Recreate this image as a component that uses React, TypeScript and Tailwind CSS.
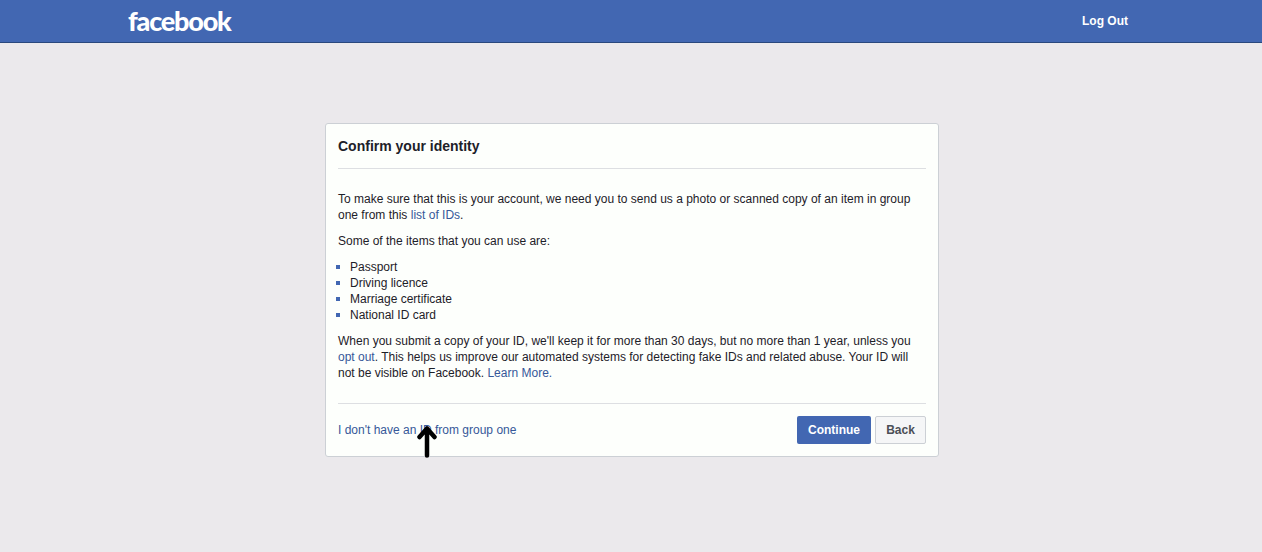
import React from "react";

const items = ["Passport", "Driving licence", "Marriage certificate", "National ID card"];

const Arrow: React.FC = () => (
  <svg className="absolute left-[90.5px] top-[301px]" width="20" height="33" viewBox="0 0 20 33" fill="none">
    <path d="M10 30.500V3.500M2.500 12L10 3.500 17.500 12" stroke="#000" strokeWidth="4.500" strokeLinecap="round" strokeLinejoin="round" />
  </svg>
);

export default function App() {
  return (
    <div className="min-h-[552px] bg-[#ebe9ec] font-['Liberation_Sans',Arial,sans-serif] text-xs leading-4 text-[#1d2129]">
      {/* Top bar */}
      <header className="h-[43px] border-b border-[#29487d] bg-[#4267b2]">
        <div className="flex h-[42px] items-center justify-between pl-[128px] pr-[134px]">
          <span className="font-['Lato',sans-serif] text-[27px] leading-[42px] font-black tracking-[-1.2px] text-white">facebook</span>
          <a className="text-xs font-bold text-white">Log Out</a>
        </div>
      </header>

      {/* Card */}
      <main className="ml-[325px] mt-[80px] w-[614px]">
        <div className="relative h-[334px] rounded-[3px] border border-[#ccd0d5] bg-[#fdfffc] px-3">
          <h2 className="h-[45px] border-b border-[#dddfe2] py-[14px] text-sm leading-[16px] font-bold text-[#1d2129]">
            Confirm your identity
          </h2>
          <div className="h-[235px] border-b border-[#dddfe2] py-[22px]">
            <p className="mb-[10px]">
              To make sure that this is your account, we need you to send us a photo or scanned copy of an item in group one from this{" "}
              <a className="text-[#365899]">list of IDs</a>.
            </p>
            <p className="mb-[10px]">Some of the items that you can use are:</p>
            <ul className="mb-[10px]">
              {items.map((item) => (
                <li key={item} className="flex items-center">
                  <span className="ml-[-2px] mr-[10px] h-1 w-1 bg-[#4267b2]" />
                  {item}
                </li>
              ))}
            </ul>
            <p>
              When you submit a copy of your ID, we'll keep it for more than 30 days, but no more than 1 year, unless you{" "}
              <a className="text-[#365899]">opt out</a>. This helps us improve our automated systems for detecting fake IDs and related abuse. Your ID will not be visible on Facebook.{" "}
              <a className="text-[#365899]">Learn More.</a>
            </p>
          </div>
          <div className="flex items-center justify-between pt-3">
            <a className="text-[#365899]">I don't have an ID from group one</a>
            <div className="flex gap-1">
              <button className="h-[28px] w-[74px] rounded-[2px] bg-[#4267b2] font-bold text-white">Continue</button>
              <button className="h-[28px] w-[51px] rounded-[2px] border border-[#ccd0d5] bg-[#f5f6f7] font-bold text-[#4b4f56]">Back</button>
            </div>
          </div>
          <Arrow />
        </div>
      </main>
    </div>
  );
}
